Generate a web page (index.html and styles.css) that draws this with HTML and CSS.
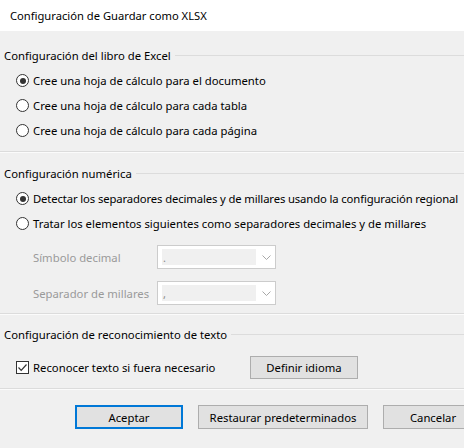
FILE: index.html
```html
<!DOCTYPE html>
<html lang="es">
<head>
<meta charset="UTF-8" />
<title>Configuración de Guardar como XLSX</title>
<link rel="stylesheet" href="styles.css">
</head>
<body>

<div class="titlebar">Configuración de Guardar como XLSX</div>

<div class="dialog">
  <div class="group first">
    <div class="legend"><span>Configuración del libro de Excel</span></div>
    <div class="opt"><span class="radio on"></span>Cree una hoja de cálculo para el documento</div>
    <div class="opt"><span class="radio"></span>Cree una hoja de cálculo para cada tabla</div>
    <div class="opt"><span class="radio"></span>Cree una hoja de cálculo para cada página</div>
  </div>
  <div class="sep"></div>

  <div class="group second">
    <div class="legend"><span>Configuración numérica</span></div>
    <div class="opt tight"><span class="radio on"></span>Detectar los separadores decimales y de millares usando la configuración regional</div>
    <div class="opt"><span class="radio"></span>Tratar los elementos siguientes como separadores decimales y de millares</div>
    <div class="field">
      <span class="field-label">Símbolo decimal</span>
      <div class="combo"><span class="combo-value">.</span>
        <svg class="chev" width="9" height="5" viewBox="0 0 9 5"><path d="M0.5 0.5 L4.5 4.5 L8.5 0.5" fill="none" stroke="#a8a8a8" stroke-width="1"/></svg>
      </div>
    </div>
    <div class="field">
      <span class="field-label">Separador de millares</span>
      <div class="combo"><span class="combo-value">,</span>
        <svg class="chev" width="9" height="5" viewBox="0 0 9 5"><path d="M0.5 0.5 L4.5 4.5 L8.5 0.5" fill="none" stroke="#a8a8a8" stroke-width="1"/></svg>
      </div>
    </div>
  </div>
  <div class="sep"></div>

  <div class="group third">
    <div class="legend"><span>Configuración de reconocimiento de texto</span></div>
    <div class="check-row">
      <div class="opt"><span class="check">
        <svg width="11" height="11" viewBox="0 0 11 11"><path d="M1.5 5.5 L4.2 8.3 L9.5 2.5" fill="none" stroke="#333" stroke-width="1.2"/></svg>
      </span>Reconocer texto si fuera necesario</div>
      <button class="btn lang">Definir idioma</button>
    </div>
  </div>
  <div class="sep"></div>

  <div class="actions">
    <button class="btn default">Aceptar</button>
    <button class="btn restore">Restaurar predeterminados</button>
    <button class="btn cancel">Cancelar</button>
  </div>
</div>

</body>
</html>
```

FILE: styles.css
```css
body {
  margin: 0;
  width: 464px;
  height: 448px;
  overflow: hidden;
  background: #f0f0f0;
  font-family: "Noto Sans", "Open Sans", sans-serif;
  font-size: 11.3px;
  color: #000;
}

.titlebar {
  height: 31px;
  line-height: 32px;
  padding-left: 10px;
  background: #fff;
  font-size: 11.2px;
}

.group.first { padding-top: 16px; }
.group.second { padding-top: 12px; }
.group.third { padding-top: 11px; }

.legend {
  display: flex;
  align-items: center;
  height: 16px;
  padding-left: 4px;
  margin-bottom: 5px;
}

.legend::after {
  content: "";
  flex: 1;
  height: 1px;
  margin-left: 4px;
  background: #dcdcdc;
}

.opt {
  display: flex;
  align-items: center;
  height: 25px;
  padding-left: 16px;
  white-space: nowrap;
}

.opt.tight { letter-spacing: -0.13px; }

.radio {
  width: 11px;
  height: 11px;
  border: 1px solid #333;
  border-radius: 50%;
  background: #fff;
  margin-right: 4px;
  position: relative;
  flex: none;
}

.radio.on::after {
  content: "";
  position: absolute;
  left: 2.5px;
  top: 2.5px;
  width: 6px;
  height: 6px;
  border-radius: 50%;
  background: #333;
}

.check {
  width: 11px;
  height: 11px;
  border: 1px solid #333;
  background: #fff;
  margin-right: 4px;
  display: flex;
  flex: none;
}

.field {
  display: flex;
  align-items: center;
  height: 24px;
  margin-top: 9px;
  padding-left: 33px;
}

.field + .field { margin-top: 12px; }

.field-label {
  width: 124px;
  color: #9a9a9a;
}

.combo {
  width: 113px;
  height: 22px;
  border: 1px solid #cccccc;
  background: #fff;
  display: flex;
  align-items: center;
  padding: 0 0 0 4px;
}

.combo-value {
  width: 93px;
  height: 16px;
  background: #f0f0f0;
  color: #8a8a8a;
  line-height: 18px;
  padding-left: 1px;
  font-size: 11px;
  flex: none;
}

.chev { margin-left: 6px; flex: none; }

.sep {
  height: 1px;
  margin-top: 8px;
  background: #dcdcdc;
  border-bottom: 1px solid #fbfbfb;
}

.check-row {
  display: flex;
  align-items: center;
  margin-top: 13px;
}

.check-row .opt { width: 234px; }

.btn {
  font-family: inherit;
  font-size: 11.3px;
  height: 23px;
  background: #e1e1e1;
  border: 1px solid #adadad;
  color: #000;
  padding: 0;
  flex: none;
}

.btn.lang { width: 108px; }

.actions {
  display: flex;
  gap: 15px;
  padding-left: 75px;
  margin-top: 15px;
  overflow: hidden;
}

.btn.default {
  width: 108px;
  height: 24px;
  border: 2px solid #0078d7;
}

.btn.restore { width: 170px; height: 24px; }
.btn.cancel { width: 100px; height: 24px; }
```
